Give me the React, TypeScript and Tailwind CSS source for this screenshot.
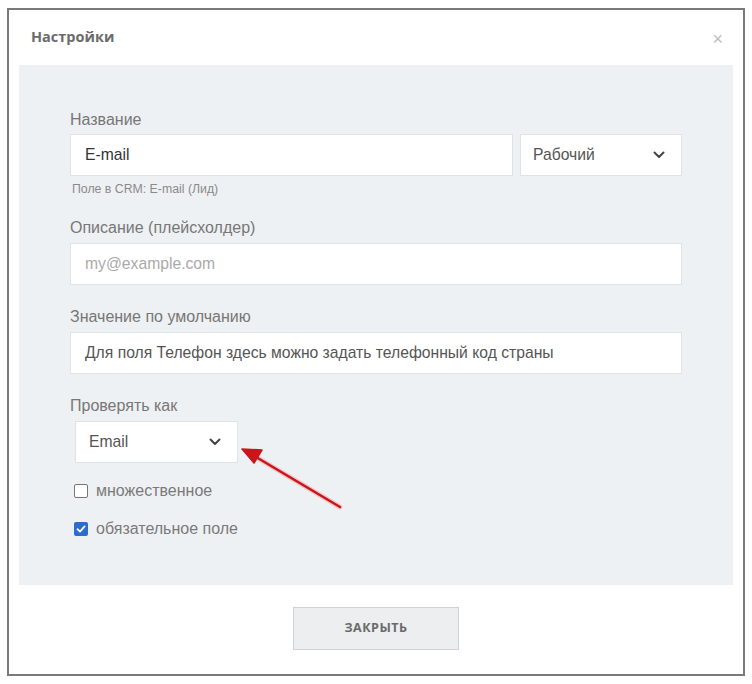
import React from 'react';

const sans = { fontFamily: '"Liberation Sans", Arial, sans-serif' };
const open = { fontFamily: '"Open Sans", "Liberation Sans", sans-serif' };

function Chevron() {
  return (
    <svg width="12" height="8" viewBox="0 0 12 8" fill="none">
      <path d="M1.5 1.5 L6 6 L10.5 1.5" stroke="#444" strokeWidth="2" strokeLinecap="round" strokeLinejoin="round" />
    </svg>
  );
}

function Checkbox({ checked, label }: { checked?: boolean; label: string }) {
  return (
    <div className="flex items-center h-[20px] pl-[4px]">
      {checked ? (
        <span className="w-[14px] h-[14px] rounded-[2px] bg-[#2b6cce] flex items-center justify-center">
          <svg width="10" height="10" viewBox="0 0 10 10" fill="none">
            <path d="M1.5 5.2 L4 7.6 L8.6 2.4" stroke="#fff" strokeWidth="1.8" strokeLinecap="round" strokeLinejoin="round" />
          </svg>
        </span>
      ) : (
        <span className="w-[14px] h-[14px] rounded-[2px] border border-[#777] bg-white" />
      )}
      <span className="ml-[8px] text-[16px] text-[#7a7a7a]">{label}</span>
    </div>
  );
}

export default function App() {
  return (
    <div className="w-[752px] h-[684px] bg-white pl-[7px] pt-[8px]" style={sans}>
      <div className="relative w-[738px] h-[668px] border-2 border-[#7a7a7a] bg-white">
        <div className="h-[55px] flex items-start justify-between pl-[22px] pr-[20px] pt-[16px]">
          <span className="text-[14.5px] font-bold text-[#6b6b6b]" style={open}>Настройки</span>
          <span className="text-[18px] leading-none text-[#bdbdbd] mt-[4px]">×</span>
        </div>
        <div className="ml-[10px] w-[714px] h-[520px] bg-[#eef1f3] pl-[51px] pr-[51px] pt-[45px] relative">
          <div className="text-[16px] leading-[20px] text-[#777]">Название</div>
          <div className="flex gap-[7px] mt-[4px]">
            <div className="w-[443px] h-[42px] bg-white border border-[#e0e3e5] flex items-center pl-[14px] text-[15.7px] text-[#333]">E-mail</div>
            <div className="w-[162px] h-[42px] bg-white border border-[#e0e3e5] flex items-center justify-between pl-[12px] pr-[16px] text-[15.7px] text-[#555]">
              <span>Рабочий</span>
              <Chevron />
            </div>
          </div>
          <div className="text-[12.3px] leading-[14px] text-[#8a8a8a] mt-[6px] pl-[2px]">Поле в CRM: E-mail (Лид)</div>

          <div className="text-[16px] leading-[20px] text-[#777] mt-[22px]">Описание (плейсхолдер)</div>
          <div className="mt-[5px] w-[612px] h-[42px] bg-white border border-[#e0e3e5] flex items-center pl-[14px] text-[15.7px] text-[#aaa]">my@example.com</div>

          <div className="text-[16px] leading-[20px] text-[#777] mt-[22px]">Значение по умолчанию</div>
          <div className="mt-[5px] w-[612px] h-[42px] bg-white border border-[#e0e3e5] flex items-center pl-[14px] text-[15.7px] text-[#555]">Для поля Телефон здесь можно задать телефонный код страны</div>

          <div className="text-[16px] leading-[20px] text-[#777] mt-[22px]">Проверять как</div>
          <div className="mt-[5px] ml-[5px] w-[163px] h-[42px] bg-white border border-[#e0e3e5] flex items-center justify-between pl-[13px] pr-[16px] text-[15.7px] text-[#555]">
            <span>Email</span>
            <Chevron />
          </div>
          <div className="mt-[18px]">
            <Checkbox label="множественное" />
          </div>
          <div className="mt-[18px]">
            <Checkbox checked label="обязательное поле" />
          </div>
        </div>
        <div className="flex justify-center pt-[22px]">
          <div className="w-[166px] h-[43px] bg-[#eceeef] border border-[#cfd2d4] flex items-center justify-center text-[12.5px] font-bold tracking-[0.5px] text-[#6a6a6a]" style={open}>ЗАКРЫТЬ</div>
        </div>
        <svg className="absolute left-0 top-0 pointer-events-none" width="738" height="668" viewBox="0 0 738 668">
          <g transform="translate(-9,-10)">
            <line x1="340" y1="507" x2="256" y2="457" stroke="#f3a0a0" strokeWidth="5" strokeLinecap="round" opacity="0.5" />
            <line x1="340" y1="507" x2="256" y2="457" stroke="#c8161b" strokeWidth="2.6" strokeLinecap="round" />
            <path d="M242 449 L262 450 L254 463 Z" fill="#c8161b" stroke="#c8161b" strokeWidth="1.5" strokeLinejoin="round" />
          </g>
        </svg>
      </div>
    </div>
  );
}
